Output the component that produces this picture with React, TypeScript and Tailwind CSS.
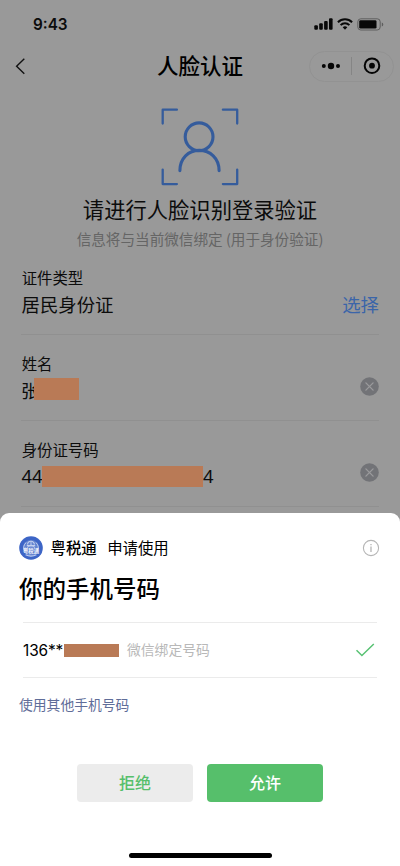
import type { ReactNode } from 'react';
import { clsx } from 'clsx';

interface FieldRowProps {
  label: string;
  action: ReactNode;
  children: ReactNode;
}

function StatusBar() {
  return (
    <div className="flex h-[46px] items-center justify-between pl-[33px] pr-[16px] pt-[2px]">
      <span className="pt-px font-['Inter'] text-[15.3px] font-semibold leading-none">9:43</span>
      <div className="flex items-center">
        <svg className="h-3 w-[19px]" viewBox="0 0 19 12" fill="#080808">
          <rect x="0.3" y="7.3" width="3.6" height="4.5" rx="1" />
          <rect x="5.2" y="5.3" width="3.6" height="6.5" rx="1" />
          <rect x="10.1" y="3" width="3.6" height="8.8" rx="1" />
          <rect x="15" y="0.3" width="3.6" height="11.5" rx="1" />
        </svg>
        <svg className="ml-1 h-3 w-4" viewBox="0 0 16 12" fill="none" stroke="#080808" strokeWidth="2">
          <path d="M0.9 4.2a10.2 10.2 0 0 1 14.2 0" />
          <path d="M3.6 7.1a6.3 6.3 0 0 1 8.8 0" />
          <path d="M8 11.7 5.7 9.3a3.3 3.3 0 0 1 4.6 0z" fill="#080808" stroke="none" />
        </svg>
        <svg className="ml-1 h-[13px] w-[27px]" viewBox="0 0 27 13" fill="none">
          <rect x="0.8" y="0.8" width="22.4" height="11.2" rx="3" stroke="#5e5e5e" strokeWidth="1" />
          <rect x="2.2" y="2.2" width="17.3" height="8.4" rx="1.4" fill="#080808" />
          <path d="M24.8 4.4c2 .7 2 3.3 0 4z" fill="#5e5e5e" />
        </svg>
      </div>
    </div>
  );
}

function NavBar() {
  return (
    <div className="grid h-[40px] grid-cols-[100px_1fr_100px] items-center">
      <svg className="ml-[15px] h-[17px] w-[11px]" viewBox="0 0 11 17" fill="none" stroke="#111" strokeWidth="1.4">
        <path d="M9.3 0.8 1.6 8.2l7.7 7.5" />
      </svg>
      <h1 className="pb-[2px] text-center text-[21.5px] font-medium leading-none text-black">人脸认证</h1>
      <div className="ml-[9px] flex h-[31px] w-[85px] items-center rounded-full border border-[#929292]">
        <svg className="ml-[11px] h-2 w-[19px]" viewBox="0 0 19 8" fill="#050505">
          <circle cx="2.8" cy="4" r="2" />
          <circle cx="10" cy="4" r="3.2" />
          <circle cx="17" cy="4" r="2" />
        </svg>
        <div className="ml-[11px] h-[18px] w-px bg-[#858585]" />
        <svg className="ml-[11px] h-[18px] w-[18px]" viewBox="0 0 18 18">
          <circle cx="9" cy="8.7" r="7.3" fill="none" stroke="#050505" strokeWidth="2" />
          <circle cx="9" cy="8.7" r="2.9" fill="#050505" />
        </svg>
      </div>
    </div>
  );
}

function FaceIcon() {
  return (
    <svg className="h-[80px] w-[80px]" viewBox="0 0 80 80" fill="none" stroke="#355c9c" strokeLinecap="round" strokeLinejoin="round">
      <g strokeWidth="2.3">
        <path d="M2.7 16.6V2.7h14.2M62.9 2.7h14.3v13.9M77.2 62.6v14.5H62.9M16.9 77.1H2.7V62.6" />
      </g>
      <g strokeWidth="3.1">
        <circle cx="39.1" cy="29.8" r="13.9" />
        <path d="M19.9 63.6C20 51.4 28.4 43.4 39.3 43.4S59 51.4 59.1 63.6" />
      </g>
    </svg>
  );
}

function ClearIcon() {
  return (
    <svg className="mb-[8px] h-[19px] w-[19px]" viewBox="0 0 19 19">
      <circle cx="9.5" cy="9.5" r="9.3" fill="#727377" />
      <path d="m5.9 5.9 7.2 7.2M13.1 5.9l-7.2 7.2" stroke="#9b9b9d" strokeWidth="1.3" strokeLinecap="round" />
    </svg>
  );
}

function FieldRow({ label, action, children }: FieldRowProps) {
  return (
    <div className="h-[86px] border-b border-[#909090] pt-[18px]">
      <div className="h-[20px] pl-[0.7px] text-[15.4px] leading-[20px]">{label}</div>
      <div className="mt-[4px] flex h-[26px] items-center justify-between text-[18.4px] leading-[26px]">
        <div className="flex items-center">{children}</div>
        {action}
      </div>
    </div>
  );
}

function Mask({ className }: { className: string }) {
  return <span className={clsx('relative bg-[#b97a56]', className)} />;
}

function AppLogo() {
  return (
    <svg className="h-6 w-6" viewBox="0 0 24 24">
      <circle cx="12" cy="12" r="11.8" fill="#3d65c6" />
      <circle cx="12" cy="12" r="8" fill="#6384d0" />
      <g fill="none" stroke="#c3d0ef">
        <path d="M5.8 15.4A7.4 7.4 0 0 1 7 6.6M18.2 15.4A7.4 7.4 0 0 0 17 6.6" strokeWidth="1" />
        <path d="M8.6 8.6c0-4.4 6.8-4.4 6.8 0M7.8 9.6h8.4" strokeWidth="1.1" />
        <path d="M8 11.6 12 9l4 2.6M12 5.6v5" strokeWidth="0.9" />
        <path d="M6.6 18.8c3.4 1.7 7.4 1.7 10.8 0" strokeWidth="1.2" />
      </g>
      <text x="12" y="17.4" textAnchor="middle" fontSize="5.3" fontWeight="700" fill="#f0f3fb">
        粤税通
      </text>
    </svg>
  );
}

function PhoneSheet() {
  return (
    <section className="flex h-[353px] flex-col items-center rounded-t-[9px] bg-white text-black">
      <div className="w-full px-[19px] pt-[23px]">
        <div className="flex h-6 items-center">
          <AppLogo />
          <span className="ml-[7.5px] pb-[2px] text-[15.4px] font-medium leading-6">粤税通</span>
          <span className="ml-[10.5px] pb-[2px] text-[15.4px] leading-6">申请使用</span>
          <svg className="ml-auto mr-px h-[18px] w-[18px]" viewBox="0 0 18 18" fill="none" stroke="#b5b5b5">
            <circle cx="9" cy="9" r="7.6" strokeWidth="1.1" />
            <path d="M9 7.6v5.4M9 4.9v1.4" strokeWidth="1.3" />
          </svg>
        </div>
        <h2 className="mt-[12px] text-[23.5px] font-medium leading-[32px]">你的手机号码</h2>
        <div className="ml-1 mr-1 mt-[18px] flex h-[56px] items-center border-y border-[#ebebeb]">
          <span className="w-[41px] pt-px font-['Inter'] text-[15.4px] tracking-[-0.1px]">136**</span>
          <Mask className="h-[13px] w-[55px]" />
          <span className="ml-2 pb-[2px] text-[13.8px] text-[#b8b8b8]">微信绑定号码</span>
          <svg className="ml-auto mr-[2px] h-[14px] w-[20px]" viewBox="0 0 20 14" fill="none" stroke="#58c273" strokeWidth="1.5">
            <path d="m1.5 7.3 5.4 5.2L18.8 1" />
          </svg>
        </div>
        <a className="mt-[16px] block text-[13.8px] leading-5 text-[#5f6d99]">使用其他手机号码</a>
      </div>
      <div className="mt-[50px] flex gap-[14px] text-[16px] font-medium">
        <button className="h-[38px] w-[116px] rounded bg-[#ececec] pb-[2px] text-[#56bf6b]">拒绝</button>
        <button className="h-[38px] w-[116px] rounded bg-[#56bf6b] pb-[2px] text-white">允许</button>
      </div>
      <div className="mt-[51px] h-[5px] w-[143px] rounded-full bg-black" />
    </section>
  );
}

export default function App() {
  return (
    <div className="h-[866px] w-[400px] overflow-hidden bg-[#999] font-['Noto_Sans_CJK_SC',sans-serif] text-[#0c0c0c]">
      <div className="h-[513px] overflow-hidden">
        <StatusBar />
        <NavBar />
        <div className="flex h-[163px] flex-col items-center pt-[21px]">
          <FaceIcon />
          <p className="mt-[6px] text-[21.3px] leading-[32px]">请进行人脸识别登录验证</p>
          <p className="mt-[4px] text-[14.6px] leading-5 text-[#656565]">信息将与当前微信绑定 (用于身份验证)</p>
        </div>
        <div className="mx-[21px]">
          <FieldRow label="证件类型" action={<span className="text-[#3b65a9]">选择</span>}>
            <span className="pl-[0.5px]">居民身份证</span>
          </FieldRow>
          <FieldRow label="姓名" action={<ClearIcon />}>
            <span className="w-[13px] whitespace-nowrap">张</span>
            <Mask className="mb-[2px] h-[22px] w-[45px]" />
          </FieldRow>
          <FieldRow label="身份证号码" action={<ClearIcon />}>
            <span className="w-[21px] whitespace-nowrap pl-[0.5px] font-['Noto_Sans']">44</span>
            <Mask className="mt-px h-[21px] w-[161px]" />
            <span className="font-['Noto_Sans']">4</span>
          </FieldRow>
        </div>
      </div>
      <PhoneSheet />
    </div>
  );
}
